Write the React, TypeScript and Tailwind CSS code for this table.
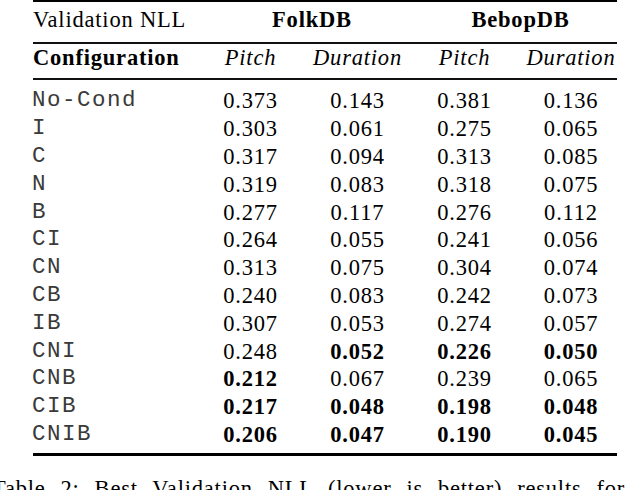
import React from "react";

type Cell = { v: string; b?: boolean };
type Row = { name: string; cells: Cell[] };

const raw: [string, string[]][] = [
  ["No-Cond", ["0.373", "0.143", "0.381", "0.136"]],
  ["I", ["0.303", "0.061", "0.275", "0.065"]],
  ["C", ["0.317", "0.094", "0.313", "0.085"]],
  ["N", ["0.319", "0.083", "0.318", "0.075"]],
  ["B", ["0.277", "0.117", "0.276", "0.112"]],
  ["CI", ["0.264", "0.055", "0.241", "0.056"]],
  ["CN", ["0.313", "0.075", "0.304", "0.074"]],
  ["CB", ["0.240", "0.083", "0.242", "0.073"]],
  ["IB", ["0.307", "0.053", "0.274", "0.057"]],
  ["CNI", ["0.248", "*0.052", "*0.226", "*0.050"]],
  ["CNB", ["*0.212", "0.067", "0.239", "0.065"]],
  ["CIB", ["*0.217", "*0.048", "*0.198", "*0.048"]],
  ["CNIB", ["*0.206", "*0.047", "*0.190", "*0.045"]],
];

const rows: Row[] = raw.map(([name, vals]) => ({
  name,
  cells: vals.map((s) => (s.startsWith("*") ? { v: s.slice(1), b: true } : { v: s })),
}));

const grid = "grid grid-cols-[164px_107px_107px_107px_99px]";

export default function App() {
  return (
    <div
      className="w-[626px] h-[490px] overflow-hidden bg-white text-black"
      style={{ fontFamily: '"Liberation Serif", "Times New Roman", serif' }}
    >
      <div className="ml-[33px] w-[584px] text-[22.5px] leading-[27.8px] tracking-[0.8px]">
        <div className="h-[2px] bg-black" />
        <div className={`${grid} pt-[3.5px] pb-[8.7px]`}>
          <div>Validation NLL</div>
          <div className="col-span-2 text-center font-bold pl-[16px]">FolkDB</div>
          <div className="col-span-2 text-center font-bold pl-[13px]">BebopDB</div>
        </div>
        <div className="h-[2px] bg-[#111]" />
        <div className={`${grid} pt-[0.5px] pb-[5.7px]`}>
          <div className="font-bold">Configuration</div>
          <div className="text-center italic">Pitch</div>
          <div className="text-center italic">Duration</div>
          <div className="text-center italic">Pitch</div>
          <div className="text-center italic pl-[7px]">Duration</div>
        </div>
        <div className="h-[2px] bg-[#111]" />
        <div className="pt-[7.5px] pb-[4px]">
          {rows.map((r) => (
            <div key={r.name} className={grid}>
              <div
                className="ml-[-1px] text-[#3a3a3a] tracking-[1.5px]"
                style={{ fontFamily: '"Liberation Mono", "Courier New", monospace' }}
              >
                {r.name}
              </div>
              {r.cells.map((c, i) => (
                <div
                  key={i}
                  className={`text-center ${c.b ? "font-bold" : ""} ${i === 3 ? "pl-[7px]" : ""}`}
                >
                  {c.v}
                </div>
              ))}
            </div>
          ))}
        </div>
        <div className="h-[3px] bg-black" />
      </div>
      <div className="mt-[19px] ml-[-8px] whitespace-nowrap text-[22.5px] leading-[27.8px] tracking-[0.8px] [word-spacing:8.5px]">
        Table 2: Best Validation NLL (lower is better) results for the
      </div>
    </div>
  );
}
